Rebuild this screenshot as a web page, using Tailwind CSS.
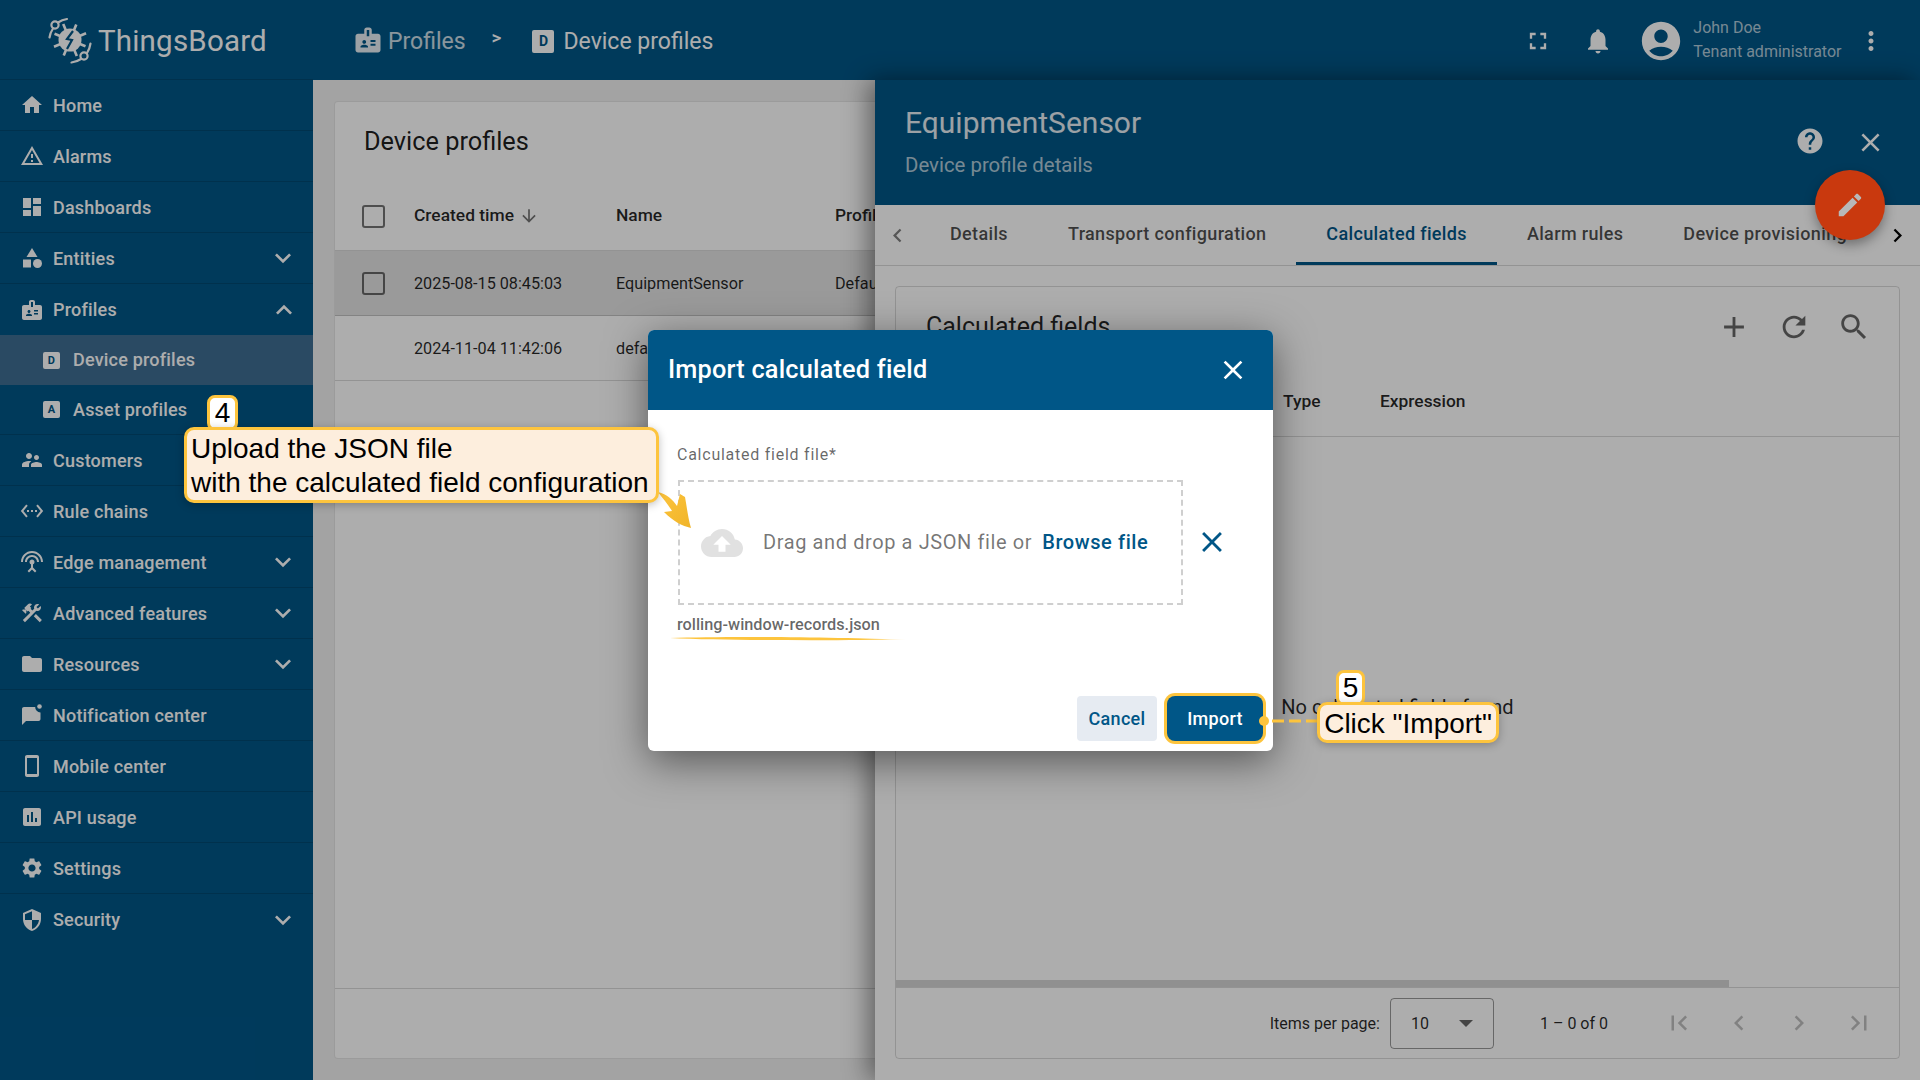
<!DOCTYPE html><html lang="en">
<head><meta charset="UTF-8"/><meta name="viewport" content="width=device-width, initial-scale=1.0"/>
<title>ThingsBoard | Device profiles</title><script src="https://cdn.jsdelivr.net/npm/@tailwindcss/browser@4"></script></head>
<body class="w-[1920px] h-[1080px] overflow-hidden relative bg-[#f0f0f0] font-['Roboto',sans-serif]">

<div class="flex h-full">

<!-- SIDEBAR -->
<aside class="w-[313px] shrink-0 bg-[#005687] text-white flex flex-col">
  <div class="h-[80px] shrink-0 border-b border-black/15 flex items-center pl-[46px]">
    <svg class="w-[48px] h-[48px]" viewBox="0 0 48 48" fill="none" stroke="white">
      <g stroke-width="3.5"><path d="M24 5v38M5 24h38M10 10l28 28M38 10L10 38" stroke-width="3" transform="rotate(22 24 24) scale(.88) translate(3.3 3.3)"/></g>
      <circle cx="24" cy="24" r="11.5" fill="white" stroke="none"/>
      <path d="M27 15l-6 8 5 1-5 9" stroke="#005687" stroke-width="2.2"/>
      <circle cx="9" cy="9" r="3.6" stroke-width="2.2"/>
      <circle cx="38" cy="40" r="3.6" stroke-width="2.2"/>
      <path d="M12 6.5c3-2 6-3 9-3.500M7 12.500c-2 3-3 5.500-3.500 9M41 37c2-3 3-6 3.500-9.500M35 43c-3 2-6 3-9.500 3.500" stroke-width="2.200" stroke-linecap="round"/>
    </svg>
    <span class="ml-[4px] mt-[4px] text-[29.5px] tracking-[.2px] text-white">ThingsBoard</span>
  </div>
  <nav class="text-[18px] font-medium tracking-[.2px]">
    <a class="flex items-center h-[51px] border-b border-black/15 pl-5"><svg class="w-6 h-6 fill-current" viewBox="0 0 24 24"><path d="M10 20v-6h4v6h5v-8h3L12 3 2 12h3v8z"/></svg><span class="ml-[9px]">Home</span></a>
    <a class="flex items-center h-[51px] border-b border-black/15 pl-5"><svg class="w-6 h-6 fill-current" viewBox="0 0 24 24"><path d="M12 5.990L19.530 19H4.470L12 5.990M12 2L1 21h22L12 2zm1 14h-2v2h2v-2zm0-6h-2v4h2v-4z"/></svg><span class="ml-[9px]">Alarms</span></a>
    <a class="flex items-center h-[51px] border-b border-black/15 pl-5"><svg class="w-6 h-6 fill-current" viewBox="0 0 24 24"><path d="M3 13h8V3H3v10zm0 8h8v-6H3v6zm10 0h8V11h-8v10zm0-18v6h8V3h-8z"/></svg><span class="ml-[9px]">Dashboards</span></a>
    <a class="flex items-center h-[51px] border-b border-black/15 pl-5"><svg class="w-6 h-6 fill-current" viewBox="0 0 24 24"><path d="M12 2l-5.500 9h11z"/><circle cx="17.500" cy="17.500" r="4.500"/><path d="M3 13.500h8v8H3z"/></svg><span class="ml-[9px]">Entities</span><svg class="w-8 h-8 ml-auto mr-[14px] fill-current" viewBox="0 0 24 24"><path d="M16.590 8.590L12 13.170 7.410 8.590 6 10l6 6 6-6z"/></svg></a>
    <a class="flex items-center h-[51px] pl-5"><svg class="w-6 h-6 fill-current" viewBox="0 0 24 24"><path d="M20 7h-5V4c0-1.100-.9-2-2-2h-2c-1.100 0-2 .9-2 2v3H4c-1.100 0-2 .9-2 2v11c0 1.100.9 2 2 2h16c1.100 0 2-.9 2-2V9c0-1.100-.9-2-2-2zM9 12c.83 0 1.500.67 1.500 1.500S9.830 15 9 15s-1.500-.67-1.500-1.500S8.170 12 9 12zm3 6H6v-.75c0-1 2-1.500 3-1.500s3 .5 3 1.500V18zm1-9h-2V4h2v5zm5 7.500h-4V15h4v1.500zm0-3h-4V12h4v1.500z"/></svg><span class="ml-[9px]">Profiles</span><svg class="w-8 h-8 ml-auto mr-[13px] fill-current rotate-180" viewBox="0 0 24 24"><path d="M16.590 8.590L12 13.170 7.410 8.590 6 10l6 6 6-6z"/></svg></a>
    <a class="flex items-center h-[50px] bg-[#3e6d93] pl-[43px]"><span class="w-[17px] h-[17px] rounded-[2px] bg-white text-[#005687] text-[11px] font-bold leading-[17px] text-center">D</span><span class="ml-[13px] -mt-[1px]">Device profiles</span></a>
    <a class="flex items-center h-[50px] border-b border-black/15 pl-[43px]"><span class="w-[17px] h-[17px] rounded-[2px] bg-white text-[#005687] text-[11px] font-bold leading-[17px] text-center">A</span><span class="ml-[13px]">Asset profiles</span></a>
    <a class="flex items-center h-[51px] border-b border-black/15 pl-5"><svg class="w-6 h-6 fill-current" viewBox="0 0 24 24"><path d="M16.500 12c1.380 0 2.490-1.120 2.490-2.500S17.880 7 16.500 7C15.120 7 14 8.120 14 9.500s1.120 2.500 2.500 2.500zM9 11c1.660 0 2.990-1.340 2.990-3S10.660 5 9 5C7.340 5 6 6.340 6 8s1.340 3 3 3zm7.500 3c-1.830 0-5.500.92-5.500 2.750V19h11v-2.250c0-1.830-3.670-2.750-5.500-2.750zM9 13c-2.330 0-7 1.170-7 3.500V19h7v-2.250c0-.85.33-2.340 2.370-3.470C10.500 13.100 9.660 13 9 13z"/></svg><span class="ml-[9px]">Customers</span></a>
    <a class="flex items-center h-[51px] border-b border-black/15 pl-5"><svg class="w-6 h-6 fill-current" viewBox="0 0 24 24"><path d="M7.770 6.760L6.230 5.480.82 12l5.410 6.520 1.540-1.280L3.420 12l4.350-5.240zM7 13h2v-2H7v2zm10-2h-2v2h2v-2zm-6 2h2v-2h-2v2zm6.770-7.520l-1.540 1.280L20.580 12l-4.350 5.240 1.540 1.280L23.180 12l-5.410-6.520z"/></svg><span class="ml-[9px]">Rule chains</span></a>
    <a class="flex items-center h-[51px] border-b border-black/15 pl-5"><svg class="w-6 h-6 fill-current" viewBox="0 0 24 24"><path d="M12 5c-3.870 0-7 3.130-7 7h2c0-2.760 2.240-5 5-5s5 2.240 5 5h2c0-3.870-3.130-7-7-7zm1 9.290c.88-.39 1.500-1.260 1.500-2.290 0-1.380-1.120-2.500-2.500-2.500S9.500 10.620 9.500 12c0 1.020.62 1.900 1.500 2.290v3.300L7.590 21 9 22.410l3-3 3 3L16.410 21 13 17.590v-3.300zM12 1C5.930 1 1 5.930 1 12h2c0-4.970 4.030-9 9-9s9 4.030 9 9h2c0-6.070-4.930-11-11-11z"/></svg><span class="ml-[9px]">Edge management</span><svg class="w-8 h-8 ml-auto mr-[14px] fill-current" viewBox="0 0 24 24"><path d="M16.590 8.590L12 13.170 7.410 8.590 6 10l6 6 6-6z"/></svg></a>
    <a class="flex items-center h-[51px] border-b border-black/15 pl-5"><svg class="w-6 h-6 fill-current" viewBox="0 0 24 24"><path d="M13.783 15.172l2.121-2.121 5.996 5.996-2.121 2.121zM17.500 10c1.930 0 3.500-1.570 3.500-3.500 0-.58-.16-1.120-.41-1.600l-2.700 2.700-1.490-1.490 2.700-2.700c-.48-.25-1.020-.41-1.600-.41C15.570 3 14 4.570 14 6.500c0 .41.08.8.21 1.160l-1.850 1.850-1.780-1.780.71-.71-1.410-1.410L12 3.490c-1.170-1.170-3.070-1.170-4.240 0L4.220 7.030l1.410 1.410H2.810l-.71.71 3.540 3.540.71-.71V9.150l1.410 1.410.71-.71 1.780 1.780-7.410 7.410 2.120 2.120L16.340 9.790c.36.13.75.21 1.160.21z"/></svg><span class="ml-[9px]">Advanced features</span><svg class="w-8 h-8 ml-auto mr-[14px] fill-current" viewBox="0 0 24 24"><path d="M16.590 8.590L12 13.170 7.410 8.590 6 10l6 6 6-6z"/></svg></a>
    <a class="flex items-center h-[51px] border-b border-black/15 pl-5"><svg class="w-6 h-6 fill-current" viewBox="0 0 24 24"><path d="M10 4H4c-1.100 0-1.990.9-1.990 2L2 18c0 1.100.9 2 2 2h16c1.100 0 2-.9 2-2V8c0-1.100-.9-2-2-2h-8l-2-2z"/></svg><span class="ml-[9px]">Resources</span><svg class="w-8 h-8 ml-auto mr-[14px] fill-current" viewBox="0 0 24 24"><path d="M16.590 8.590L12 13.170 7.410 8.590 6 10l6 6 6-6z"/></svg></a>
    <a class="flex items-center h-[51px] border-b border-black/15 pl-5"><svg class="w-6 h-6 fill-current" viewBox="0 0 24 24"><path d="M20.500 9.400V16c0 1.100-.9 2-2 2H6l-4 4V6c0-1.100.9-2 2-2h11.200a5.200 5.200 0 0 0 5.300 5.400z"/><circle cx="19.500" cy="3.500" r="2.300"/></svg><span class="ml-[9px]">Notification center</span></a>
    <a class="flex items-center h-[51px] border-b border-black/15 pl-5"><svg class="w-6 h-6 fill-current" viewBox="0 0 24 24"><path d="M17 1.010L7 1c-1.100 0-2 .9-2 2v18c0 1.100.9 2 2 2h10c1.100 0 2-.9 2-2V3c0-1.100-.9-1.990-2-1.990zM17 20H7V4h10v16z"/></svg><span class="ml-[9px]">Mobile center</span></a>
    <a class="flex items-center h-[51px] border-b border-black/15 pl-5"><svg class="w-6 h-6 fill-current" viewBox="0 0 24 24"><path d="M19 3H5c-1.100 0-2 .9-2 2v14c0 1.100.9 2 2 2h14c1.100 0 2-.9 2-2V5c0-1.100-.9-2-2-2zM9 17H7v-7h2v7zm4 0h-2V7h2v10zm4 0h-2v-4h2v4z"/></svg><span class="ml-[9px]">API usage</span></a>
    <a class="flex items-center h-[51px] border-b border-black/15 pl-5"><svg class="w-6 h-6 fill-current" viewBox="0 0 24 24"><path d="M19.140 12.940c.04-.3.06-.61.06-.94 0-.32-.02-.64-.07-.94l2.030-1.580c.18-.14.23-.41.12-.61l-1.920-3.320c-.12-.22-.37-.29-.59-.22l-2.390.96c-.5-.38-1.030-.7-1.620-.94l-.36-2.540c-.04-.24-.24-.41-.48-.41h-3.840c-.24 0-.43.17-.47.41l-.36 2.540c-.59.24-1.130.57-1.620.94l-2.390-.96c-.22-.08-.47 0-.59.22L2.740 8.870c-.12.21-.08.47.12.61l2.030 1.580c-.05.3-.09.63-.09.94s.02.64.07.94l-2.030 1.580c-.18.14-.23.41-.12.61l1.920 3.320c.12.22.37.29.59.22l2.390-.96c.5.38 1.030.7 1.620.94l.36 2.540c.05.24.24.41.48.41h3.840c.24 0 .44-.17.47-.41l.36-2.540c.59-.24 1.130-.56 1.620-.94l2.390.96c.22.08.47 0 .59-.22l1.920-3.320c.12-.22.07-.47-.12-.61l-2.010-1.580zM12 15.600c-1.980 0-3.600-1.620-3.600-3.600s1.620-3.600 3.600-3.600 3.600 1.620 3.600 3.600-1.620 3.600-3.600 3.600z"/></svg><span class="ml-[9px]">Settings</span></a>
    <a class="flex items-center h-[51px] pl-5"><svg class="w-6 h-6 fill-current" viewBox="0 0 24 24"><path d="M12 1L3 5v6c0 5.550 3.840 10.740 9 12 5.160-1.260 9-6.450 9-12V5l-9-4zm0 10.990h7c-.53 4.120-3.280 7.790-7 8.940V12H5V6.300l7-3.110v8.800z"/></svg><span class="ml-[9px]">Security</span><svg class="w-8 h-8 ml-auto mr-[14px] fill-current" viewBox="0 0 24 24"><path d="M16.590 8.590L12 13.170 7.410 8.590 6 10l6 6 6-6z"/></svg></a>
  </nav>
</aside>

<div class="flex-1 flex flex-col min-w-0">
  <!-- TOPBAR -->
  <header class="h-[80px] shrink-0 bg-[#005687] text-white flex items-center pl-[40px]">
    <svg class="w-[30px] h-[30px] fill-white/90" viewBox="0 0 24 24"><path d="M20 7h-5V4c0-1.100-.9-2-2-2h-2c-1.100 0-2 .9-2 2v3H4c-1.100 0-2 .9-2 2v11c0 1.100.9 2 2 2h16c1.100 0 2-.9 2-2V9c0-1.100-.9-2-2-2zM9 12c.83 0 1.500.67 1.500 1.500S9.830 15 9 15s-1.500-.67-1.500-1.500S8.170 12 9 12zm3 6H6v-.75c0-1 2-1.500 3-1.500s3 .5 3 1.500V18zm1-9h-2V4h2v5zm5 7.500h-4V15h4v1.500zm0-3h-4V12h4v1.500z"/></svg>
    <span class="ml-[5px] mt-[5px] text-[23px] text-white/80">Profiles</span>
    <span class="ml-[26px] text-[19px] font-medium -mt-[4px]">&gt;</span>
    <span class="ml-[31px] mt-[2px] w-[22px] h-[23px] rounded-[2px] bg-white text-[#005687] text-[14px] font-bold leading-[23px] text-center">D</span>
    <span class="ml-[9px] mt-[5px] text-[23px] text-white">Device profiles</span>
    <svg class="w-7 h-7 ml-[811px] mt-[1px] fill-white" viewBox="0 0 24 24"><path d="M7 14H5v5h5v-2H7v-3zm-2-4h2V7h3V5H5v5zm12 7h-3v2h5v-5h-2v3zM14 5v2h3v3h2V5h-5z"/></svg>
    <svg class="w-[30px] h-[30px] ml-[31px] mt-[1px] fill-white" viewBox="0 0 24 24"><path d="M12 22c1.100 0 2-.9 2-2h-4c0 1.100.89 2 2 2zm6-6v-5c0-3.070-1.640-5.640-4.500-6.320V4c0-.83-.67-1.500-1.500-1.500s-1.500.67-1.500 1.500v.68C7.630 5.360 6 7.920 6 11v5l-2 2v1h16v-1l-2-2z"/></svg>
    <svg class="w-[46px] h-[46px] ml-[25px] mt-[1px] fill-white" viewBox="0 0 24 24"><path d="M12 2C6.480 2 2 6.480 2 12s4.480 10 10 10 10-4.480 10-10S17.520 2 12 2zm0 4c1.930 0 3.500 1.570 3.500 3.500S13.930 13 12 13s-3.500-1.570-3.500-3.500S10.070 6 12 6zm0 14c-2.030 0-4.430-.82-6.140-2.880C7.550 15.800 9.680 15 12 15s4.450.8 6.140 2.120C16.430 19.180 14.030 20 12 20z"/></svg>
    <div class="ml-[9px] w-[150px] text-[16px] leading-[24px] text-white/70"><div>John Doe</div><div>Tenant administrator</div></div>
    <svg class="w-[30px] h-[30px] ml-[13px] mt-[1px] fill-white" viewBox="0 0 24 24"><path d="M12 8c1.100 0 2-.9 2-2s-.9-2-2-2-2 .9-2 2 .9 2 2 2zm0 2c-1.100 0-2 .9-2 2s.9 2 2 2 2-.9 2-2-.9-2-2-2zm0 6c-1.100 0-2 .9-2 2s.9 2 2 2 2-.9 2-2-.9-2-2-2z"/></svg>
  </header>

  <div class="flex-1 flex min-h-0">
    <!-- DEVICE PROFILES TABLE -->
    <main class="w-[562px] shrink-0 overflow-hidden pt-[21px] pl-[21px]">
      <section class="w-[700px] h-[958px] bg-white rounded border border-black/10 flex flex-col text-[16.2px] text-black/85">
        <h2 class="h-[80px] pl-[29px] flex items-center text-[25.3px] text-black/90">Device profiles</h2>
        <div class="h-[69px] flex items-center border-b border-black/15 pl-[27px] font-medium text-[17.4px]">
          <span class="w-[23px] h-[23px] border-2 border-black/55 rounded-[3px] mr-[29px]"></span>
          <span class="w-[202px] flex items-center -mt-[1px]">Created time<svg class="w-5 h-5 ml-[5px] fill-black/55 mt-[2px]" viewBox="0 0 24 24"><path d="M20 12l-1.410-1.410L13 16.170V4h-2v12.170l-5.580-5.590L4 12l8 8 8-8z"/></svg></span>
          <span class="w-[219px] -mt-[1px]">Name</span><span class="-mt-[1px]">Profile</span>
        </div>
        <div class="h-[65px] flex items-center border-b border-black/15 pl-[27px] bg-[#e3e3e3]">
          <span class="w-[23px] h-[23px] border-2 border-black/55 rounded-[3px] mr-[29px]"></span>
          <span class="w-[202px] pt-[2px]">2025-08-15 08:45:03</span><span class="w-[219px] pt-[2px]">EquipmentSensor</span><span class="pt-[2px]">Default</span>
        </div>
        <div class="h-[65px] flex items-center border-b border-black/15 pl-[79px]">
          <span class="w-[202px] pt-[2px]">2024-11-04 11:42:06</span><span class="w-[219px] pt-[2px]">default</span><span class="pt-[2px]">Default</span>
        </div>
        <div class="mt-auto h-[70px] border-t border-black/15"></div>
      </section>
    </main>

    <!-- DETAILS PANEL -->
    <section class="flex-1 min-w-0 flex flex-col bg-[#f9f9f9] shadow-[-6px_0_24px_rgba(0,0,0,.45)] z-[1]">
      <div class="h-[125px] shrink-0 bg-[#005687] text-white relative pl-[30px]">
        <div class="pt-[21px] text-[30px] leading-[44px] text-white/90">EquipmentSensor</div>
        <div class="text-[20.4px] leading-[30px] mt-[5px] text-white/70">Device profile details</div>
        <svg class="absolute left-[920px] top-[46px] w-[30px] h-[30px] fill-white" viewBox="0 0 24 24"><path d="M12 2C6.480 2 2 6.480 2 12s4.480 10 10 10 10-4.480 10-10S17.520 2 12 2zm1 17h-2v-2h2v2zm2.070-7.750l-.9.92C13.450 12.900 13 13.500 13 15h-2v-.5c0-1.100.45-2.100 1.170-2.830l1.240-1.260c.37-.36.59-.86.59-1.410 0-1.100-.9-2-2-2s-2 .9-2 2H8c0-2.210 1.790-4 4-4s4 1.790 4 4c0 .88-.36 1.680-.93 2.250z"/></svg>
        <svg class="absolute left-[980px] top-[47px] w-[31px] h-[31px] fill-white" viewBox="0 0 24 24"><path d="M19 6.410L17.590 5 12 10.590 6.410 5 5 6.410 10.590 12 5 17.590 6.410 19 12 13.410 17.590 19 19 17.590 13.410 12z"/></svg>
      </div>

      <!-- tabs -->
      <div class="h-[61px] shrink-0 flex border-b border-black/15 text-[18px] font-medium tracking-[.35px] text-black/70 bg-white">
        <div class="w-[45px] flex items-center justify-center"><svg class="w-[27px] h-[27px] fill-black/50" viewBox="0 0 24 24"><path d="M15.410 7.410L14 6l-6 6 6 6 1.410-1.410L10.830 12z"/></svg></div>
        <div class="flex-1 flex overflow-hidden whitespace-nowrap">
          <span class="px-[30px] pb-[3px] flex items-center">Details</span>
          <span class="px-[30px] pb-[3px] flex items-center">Transport configuration</span>
          <span class="px-[30px] flex items-center text-[#005687] border-b-[3px] border-[#005687]">Calculated fields</span>
          <span class="px-[30px] pb-[3px] flex items-center">Alarm rules</span>
          <span class="px-[30px] pb-[3px] flex items-center">Device provisioning</span>
        </div>
        <div class="w-[40px] pr-[6px] flex items-center justify-center"><svg class="w-[27px] h-[27px] shrink-0 fill-black" viewBox="0 0 24 24"><path d="M10 6L8.590 7.410 13.170 12l-4.580 4.590L10 18l6-6z"/></svg></div>
      </div>

      <div class="flex-1 min-h-0 pt-[20px] pl-[20px] pr-[20px] pb-[21px] bg-white">
        <div class="h-full border border-black/15 rounded flex flex-col text-black/85">
          <div class="h-[150px] shrink-0 border-b border-black/15 relative">
            <div class="h-[80px] pl-[30px] flex items-center text-[25px]">Calculated fields</div>
            <svg class="absolute left-[821px] top-[23px] w-[34px] h-[34px] fill-black/60" viewBox="0 0 24 24"><path d="M19 13h-6v6h-2v-6H5v-2h6V5h2v6h6v2z"/></svg>
            <svg class="absolute left-[881px] top-[23px] w-[34px] h-[34px] fill-black/60" viewBox="0 0 24 24"><path d="M17.650 6.350C16.200 4.900 14.210 4 12 4c-4.420 0-7.990 3.580-7.990 8s3.570 8 7.990 8c3.730 0 6.840-2.550 7.730-6h-2.080c-.82 2.330-3.040 4-5.650 4-3.310 0-6-2.690-6-6s2.690-6 6-6c1.660 0 3.140.69 4.220 1.780L13 11h7V4l-2.350 2.350z"/></svg>
            <svg class="absolute left-[941px] top-[23px] w-[34px] h-[34px] fill-black/60" viewBox="0 0 24 24"><path d="M15.500 14h-.79l-.28-.27C15.410 12.590 16 11.110 16 9.500 16 5.910 13.090 3 9.500 3S3 5.910 3 9.500 5.910 16 9.500 16c1.610 0 3.090-.59 4.230-1.570l.27.28v.79l5 4.990L20.490 19l-4.990-5zm-6 0C7.010 14 5 11.990 5 9.500S7.010 5 9.500 5 14 7.010 14 9.500 11.990 14 9.500 14z"/></svg>
            <div class="h-[68px] pl-[387px] flex items-center text-[17.4px] font-medium"><span class="w-[97px]">Type</span><span>Expression</span></div>
          </div>
          <div class="flex-1 flex items-center justify-center text-[20px] pb-[4px]">No calculated fields found</div>
          <div class="h-[7px] w-[833px] shrink-0 bg-[#d4d4d4]"></div>
          <div class="h-[71px] shrink-0 border-t border-black/15 flex items-center justify-end pr-[25px] text-[16px]">
            <span class="pt-[2px]">Items per page:</span>
            <div class="ml-[10px] w-[104px] h-[51px] border border-black/40 rounded flex items-center pl-[20px] pr-[20px] pt-[1px]">10<span class="ml-auto border-x-[7px] border-x-transparent border-t-[7px] border-t-black/60"></span></div>
            <span class="ml-[46px] mr-[56px] pt-[2px]">1 – 0 of 0</span>
            <svg class="w-[30px] h-[30px] fill-black/25 mr-[30px]" viewBox="0 0 24 24"><path d="M18.410 16.590L13.820 12l4.590-4.590L17 6l-6 6 6 6zM6 6h2v12H6z"/></svg>
            <svg class="w-[30px] h-[30px] fill-black/25 mr-[30px]" viewBox="0 0 24 24"><path d="M15.410 7.410L14 6l-6 6 6 6 1.410-1.410L10.830 12z"/></svg>
            <svg class="w-[30px] h-[30px] fill-black/25 mr-[30px]" viewBox="0 0 24 24"><path d="M10 6L8.590 7.410 13.170 12l-4.580 4.590L10 18l6-6z"/></svg>
            <svg class="w-[30px] h-[30px] fill-black/25" viewBox="0 0 24 24"><path d="M5.590 7.410L10.180 12l-4.590 4.590L7 18l6-6-6-6zM16 6h2v12h-2z"/></svg>
          </div>
        </div>
      </div>
    </section>
  </div>
</div>
</div>

<!-- BACKDROP -->
<div class="absolute inset-0 bg-black/32 z-10"></div>

<!-- FAB -->
<div class="absolute left-[1815px] top-[170px] w-[70px] h-[70px] rounded-full bg-[#c9390e] z-10 shadow-[0_5px_12px_rgba(0,0,0,.35)] flex items-center justify-center">
  <svg class="w-[30px] h-[30px] fill-[#b8b8b8]" viewBox="0 0 24 24"><path d="M3 17.250V21h3.750L17.810 9.940l-3.750-3.750L3 17.250zM20.710 7.040c.39-.39.39-1.020 0-1.410l-2.340-2.340c-.39-.39-1.020-.39-1.410 0l-1.830 1.830 3.750 3.750 1.830-1.830z"/></svg>
</div>

<!-- DIALOG -->
<div class="absolute left-[648px] top-[330px] w-[625px] h-[421px] z-20 bg-white rounded-md overflow-hidden flex flex-col shadow-[0_10px_40px_rgba(0,0,0,.5)]">
  <div class="h-[80px] shrink-0 bg-[#005687] text-white flex items-center pl-[20px] pr-[24px]">
    <span class="text-[25.3px] font-medium tracking-[.2px]">Import calculated field</span>
    <svg class="w-[32px] h-[32px] ml-auto fill-white" viewBox="0 0 24 24"><path d="M19 6.410L17.590 5 12 10.590 6.410 5 5 6.410 10.590 12 5 17.590 6.410 19 12 13.410 17.590 19 19 17.590 13.410 12z"/></svg>
  </div>
  <div class="flex-1 flex flex-col pl-[29px] pr-[10px] pb-[10px]">
    <label class="mt-[33px] h-[24px] leading-[24px] text-[16px] tracking-[.75px] text-black/60">Calculated field file*</label>
    <div class="mt-[13px] flex items-center">
      <div class="ml-[1px] w-[505px] h-[125px] border-2 border-dashed border-[#cfcfcf] flex items-center pl-[21px]">
        <svg class="w-[42px] h-[42px] fill-[#e1e1e1]" viewBox="0 0 24 24"><path d="M19.350 10.040C18.670 6.590 15.640 4 12 4 9.110 4 6.600 5.640 5.350 8.040 2.340 8.360 0 10.910 0 14c0 3.310 2.690 6 6 6h13c2.760 0 5-2.240 5-5 0-2.640-2.050-4.780-4.650-4.960zM14 13v4h-4v-4H7l5-5 5 5h-3z"/></svg>
        <span class="ml-[20px] -mt-[1px] text-[20px] tracking-[.6px] text-black/55">Drag and drop a JSON file or</span>
        <span class="ml-[10px] -mt-[1px] text-[20px] font-medium tracking-[.6px] text-[#005687]">Browse file</span>
      </div>
      <svg class="w-[34px] h-[34px] ml-[12px] -mt-[1px] fill-[#005687]" viewBox="0 0 24 24"><path d="M19 6.410L17.590 5 12 10.590 6.410 5 5 6.410 10.590 12 5 17.590 6.410 19 12 13.410 17.590 19 19 17.590 13.410 12z"/></svg>
    </div>
    <div class="mt-[8px] h-[24px] leading-[24px] text-[16.3px] font-medium text-black/60">rolling-window-records.json</div>
    <div class="mt-auto flex justify-end gap-[10px]">
      <button class="w-[80px] h-[45px] rounded bg-[#e6ebf2] text-[#005687] text-[18px] font-medium tracking-[.3px] pb-[1px]">Cancel</button>
      <button class="w-[96px] h-[45px] rounded-lg bg-[#005687] text-white text-[18px] font-medium tracking-[.3px] pb-[1px] ring-[3px] ring-[#fdc43d]">Import</button>
    </div>
  </div>
</div>

<!-- ANNOTATIONS -->
<svg class="absolute left-[655px] top-[485px] w-[45px] h-[50px] z-30" viewBox="0 0 45 50">
  <defs><linearGradient id="arrowFill" x1="0" y1="0" x2="1" y2="1"><stop offset="0" stop-color="#fdc43d"/><stop offset="1" stop-color="#f0b429"/></linearGradient></defs>
  <path d="M3 7c9 2 15 8 19 14l3-12 5 3c2 11 3 21 6 31C27 41 18 36 9 27l8-1C13 19 8 14 3 7z" fill="url(#arrowFill)"/>
</svg>
<svg class="absolute left-[670px] top-[636px] w-[236px] h-[5px] z-30" viewBox="0 0 236 5">
  <defs><linearGradient id="lineFill"><stop offset="0" stop-color="#fdc43d"/><stop offset=".8" stop-color="#fdc43d"/><stop offset="1" stop-color="#fdc43d" stop-opacity=".2"/></linearGradient></defs>
  <path d="M0 2c60-2 170-1 236 2C170 4 60 5 0 2z" fill="url(#lineFill)"/>
</svg>

<div class="absolute left-[207px] top-[395px] w-[31px] h-[36px] z-30 bg-white border-[3px] border-[#fdc43d] rounded-lg text-black text-[28px] leading-[30px] text-center font-['Liberation_Sans',sans-serif]">4</div>
<div class="absolute left-[184px] top-[427px] w-[475px] h-[76px] z-30 bg-[#fdeedd] border-[3px] border-[#fdc43d] rounded-[10px] pl-[4px] pt-[2px] text-black text-[28px] leading-[34px] whitespace-nowrap font-['Liberation_Sans',sans-serif] shadow-[0_2px_8px_rgba(0,0,0,.25)]">Upload the JSON file<br/>with the calculated field configuration</div>

<div class="absolute left-[1259px] top-[716px] w-[10px] h-[10px] rounded-full bg-[#fdc43d] z-30"></div>
<svg class="absolute left-[1268px] top-[719px] w-[50px] h-[4px] z-30" viewBox="0 0 50 4"><path d="M4 2H50" stroke="#fdc43d" stroke-width="3" stroke-dasharray="12 5"/></svg>
<div class="absolute left-[1336px] top-[670px] w-[29px] h-[36px] z-30 bg-white border-[3px] border-[#fdc43d] rounded-lg text-black text-[28px] leading-[30px] text-center font-['Liberation_Sans',sans-serif]">5</div>
<div class="absolute left-[1317px] top-[702px] w-[182px] h-[41px] z-30 bg-[#fdeedd] border-[3px] border-[#fdc43d] rounded-[10px] pt-[1px] text-black text-[28px] leading-[35px] text-center whitespace-nowrap font-['Liberation_Sans',sans-serif] shadow-[0_2px_8px_rgba(0,0,0,.25)]">Click "Import"</div>

</body></html>
